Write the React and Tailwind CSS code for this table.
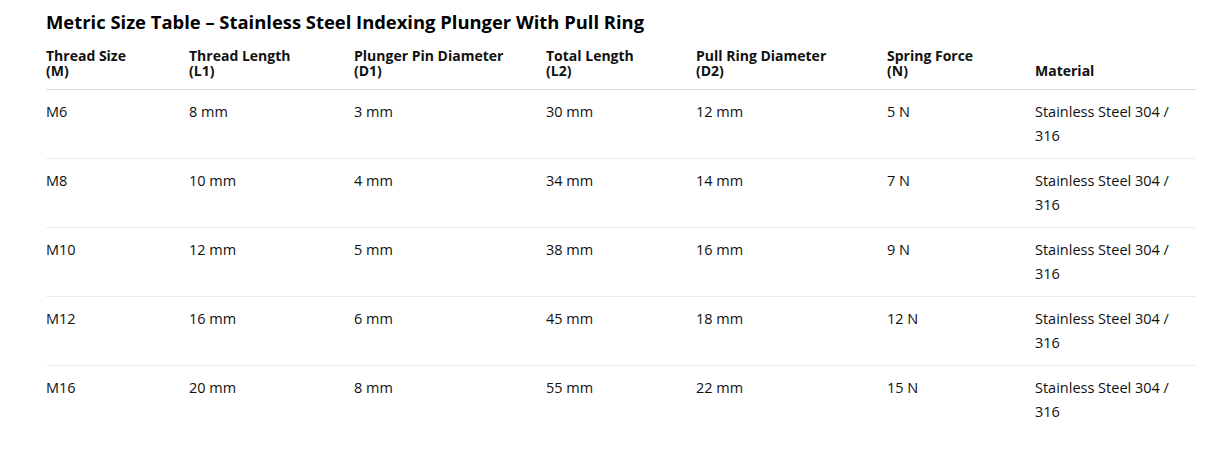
import React from "react";

const headers = [
  ["Thread Size", "(M)"],
  ["Thread Length", "(L1)"],
  ["Plunger Pin Diameter", "(D1)"],
  ["Total Length", "(L2)"],
  ["Pull Ring Diameter", "(D2)"],
  ["Spring Force", "(N)"],
  ["Material"],
];

const widths = ["w-[143px]", "w-[165px]", "w-[192px]", "w-[150px]", "w-[191px]", "w-[148px]", "w-[161px]"];

const rows = [
  ["M6", "8 mm", "3 mm", "30 mm", "12 mm", "5 N"],
  ["M8", "10 mm", "4 mm", "34 mm", "14 mm", "7 N"],
  ["M10", "12 mm", "5 mm", "38 mm", "16 mm", "9 N"],
  ["M12", "16 mm", "6 mm", "45 mm", "18 mm", "12 N"],
  ["M16", "20 mm", "8 mm", "55 mm", "22 mm", "15 N"],
];

export default function App() {
  return (
    <div className="w-[1228px] h-[465px] bg-white text-[#111] font-['Open_Sans','Noto_Sans',sans-serif] pl-[46px] pt-[9px]">
      <h2 className="text-[18.4px] leading-[26px] font-bold text-black">
        Metric Size Table – Stainless Steel Indexing Plunger With Pull Ring
      </h2>
      <table className="table-fixed border-collapse w-[1150px] mt-[13px]">
        <colgroup>
          {widths.map((w, i) => (
            <col key={i} className={w} />
          ))}
        </colgroup>
        <thead>
          <tr className="border-b border-[#d9d9d9]">
            {headers.map((h, i) => (
              <th key={i} className="text-left align-bottom font-bold text-[14px] leading-[15px] pb-[11px] pr-2">
                {h[0]}
                {h[1] && <br />}
                {h[1]}
              </th>
            ))}
          </tr>
        </thead>
        <tbody>
          {rows.map((r, ri) => (
            <tr key={ri} className={ri < rows.length - 1 ? "border-b border-[#ececec]" : ""}>
              {r.map((c, ci) => (
                <td key={ci} className="align-top text-[14.5px] leading-[24px] py-[10px] pr-2">
                  {c}
                </td>
              ))}
              <td className="align-top text-[14.5px] leading-[24px] py-[10px] pr-2">
                Stainless Steel 304 /<br />316
              </td>
            </tr>
          ))}
        </tbody>
      </table>
    </div>
  );
}
